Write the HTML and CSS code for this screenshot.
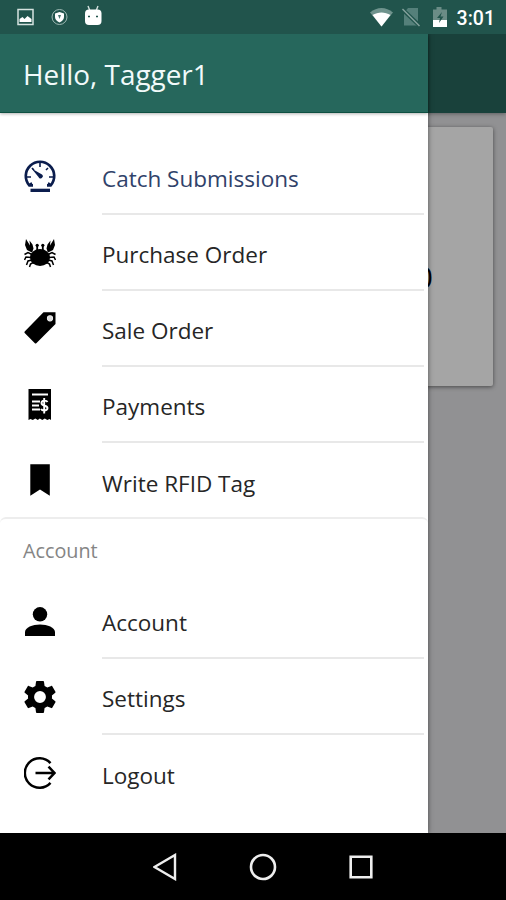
FILE: index.html
```html
<!DOCTYPE html>
<html lang="en">
<head>
<meta charset="utf-8">
<title>Tagger</title>
<link rel="stylesheet" href="styles.css">
</head>
<body>
<div class="phone">
  <header class="status">
    <svg class="notices" width="90" height="24" viewBox="0 0 90 24">
      <path d="M2 4.500h15v15H2z" fill="none" stroke="#d5e2df" stroke-width="1.500"/>
      <path d="M3.500 17v-3l3-2 2 2 3-3 4 3v3z" fill="#fff"/>
      <circle cx="43.500" cy="12" r="7.500" fill="none" stroke="#9eb9b4"/>
      <path d="M43.500 7l4.500 1.500v3.500c0 2.500-2 4.500-4.500 5.500-2.500-1-4.500-3-4.500-5.500V8.500z" fill="#fff"/>
      <path d="M42 10h3l-1.500 4z" fill="#47736d"/>
      <path d="M72 1l2 5M82 1l-2 5" stroke="#d5e2df" stroke-width="1.400"/>
      <rect x="69" y="4.500" width="16.500" height="15.500" rx="4" fill="#fff"/>
      <path d="M72 11.500h2M80 11.500h2" stroke="#21544c" stroke-width="1.500"/>
    </svg>
    <div class="signals">
      <svg width="82" height="24" viewBox="0 0 82 24">
        <path d="M0 7.500C7 1.500 16 1.500 23 7.500L11.500 21.500z" fill="#6f938d"/>
        <path d="M2.500 10C8 6.500 15 6.500 20.500 10l-9 11.500z" fill="#fff"/>
        <path d="M38 3h10v17.500H34V8z" fill="#55807a"/>
        <path d="M32.500 4.500l18 17" stroke="#21544c" stroke-width="4"/>
        <path d="M32.500 4l17 17" stroke="#86a39e" stroke-width="1.500"/>
        <path d="M63 4.500h3.500V2h5v2.500H77V20H63z" fill="#6b8c86"/>
        <path d="M63 15h14v7H63z" fill="#fff"/>
        <path d="M72 7l-5 6h3l-1 5 4.500-6.500h-3z" fill="#21544c"/>
      </svg>
      <span class="clock">3:01</span>
    </div>
  </header>

  <main class="screen">
    <section class="page">
      <div class="toolbar"></div>
      <div class="card"><span class="value">0</span></div>
    </section>

    <aside class="drawer">
      <h1 class="greeting">Hello, Tagger1</h1>
      <nav class="menu">
        <a class="item active">
          <svg class="icon" viewBox="0 0 32 32">
            <path d="M9 25.300H5.300A14.200 14.200 0 1 1 26.700 25.300H23" fill="none" stroke="currentColor" stroke-width="2.700"/>
            <path d="M16 3v4M8 8l2 2M24 8l-2 2M3 17h4M29 17h-4M5.500 24l2.500-1M26.500 24L24 23" stroke="currentColor" stroke-width="1.600"/>
            <path d="M7.500 8.500L18 14.500a2.200 2.200 0 1 1-3.500 2.500z" fill="currentColor"/>
            <path d="M6.500 28.700h19.500v3.300H6.500z" fill="currentColor"/>
          </svg>
          <span class="label">Catch Submissions</span>
        </a>
        <a class="item">
          <svg class="icon crab" viewBox="0 0 32 32">
            <ellipse cx="16" cy="20.500" rx="10" ry="8.500" fill="currentColor"/>
            <path d="M13.200 8v5M18.800 8v5M8 14.500l-4-4.500M24 14.500l4-4.500" fill="none" stroke="currentColor" stroke-width="1.800"/>
            <circle cx="13.200" cy="8.300" r="1.600" fill="currentColor"/>
            <circle cx="18.800" cy="8.300" r="1.600" fill="currentColor"/>
            <path d="M2 2L1 8l2 5 5 2.500 1.500-4-1-4-3-4 .5 5zM30 2l1 6-2 5-5 2.500-1.500-4 1-4 3-4-.5 5z" fill="currentColor"/>
            <path d="M8 17.500l-4-2-3.500 2M7 20.500l-5-.5-1.500 3M8 23l-4 1-1.500 4M10 25l-3.500 2L5.500 30M24 17.500l4-2 3.500 2M25 20.500l5-.5 1.500 3M24 23l4 1 1.500 4M22 25l3.500 2 1 3" fill="none" stroke="currentColor" stroke-width="1.500"/>
          </svg>
          <span class="label">Purchase Order</span>
        </a>
        <a class="item">
          <svg class="icon" viewBox="0 0 32 32">
            <path fill-rule="evenodd" d="M19.500.3H31.500V12L12.300 31.200Q11.600 31.900 10.900 31.200L.7 21Q0 20.300.7 19.600zM26 3.200a3.100 3.100 0 1 0 0 6.200 3.100 3.100 0 1 0 0-6.200z" fill="currentColor"/>
            <circle cx="26" cy="6.300" r="2.600" fill="#ddd"/>
          </svg>
          <span class="label">Sale Order</span>
        </a>
        <a class="item">
          <svg class="icon" viewBox="0 0 32 32">
            <path d="M4.500 1h22.500v31l-1.500-1-2.200 1-2.500-1.500-2.500 1.500-2.500-1.500L13.800 32l-2.500-1.500L8.800 32l-2.300-1-2 1z" fill="currentColor"/>
            <path d="M8 6.500h16M8 13.500h8M8 17.500h7M8 21.500h8" stroke="#fff" stroke-width="2"/>
            <path d="M23.500 14c-1-2-6-2-6 1 0 3.500 6 2 6 5s-5 3.300-6.500 1M20.200 10v15.500" fill="none" stroke="#fff" stroke-width="1.900"/>
          </svg>
          <span class="label">Payments</span>
        </a>
        <a class="item">
          <svg class="icon" viewBox="0 0 32 32">
            <path d="M6.300.2h19.500v31.500L16 25.500l-9.700 6.200z" fill="currentColor"/>
          </svg>
          <span class="label">Write RFID Tag</span>
        </a>
      </nav>
      <nav class="menu account">
        <h2 class="heading">Account</h2>
        <a class="item">
          <svg class="icon" viewBox="0 0 32 32">
            <circle cx="16" cy="9.300" r="7.200" fill="currentColor"/>
            <path d="M1 31v-4c0-4.500 7.500-7.500 15-7.500S31 22.500 31 27v4z" fill="currentColor"/>
          </svg>
          <span class="label">Account</span>
        </a>
        <a class="item">
          <svg class="icon" viewBox="2 2 20 20">
            <path d="M19.430 12.980c.04-.32.070-.640.070-.980s-.030-.660-.070-.980l2.110-1.650c.19-.15.240-.42.120-.640l-2-3.460c-.12-.22-.39-.3-.61-.22l-2.490 1c-.52-.4-1.080-.73-1.690-.98l-.38-2.650C14.460 2.180 14.250 2 14 2h-4c-.25 0-.46.180-.49.420l-.38 2.650c-.61.250-1.170.590-1.690.980l-2.490-1c-.23-.09-.49 0-.61.220l-2 3.460c-.13.220-.07.490.12.640l2.110 1.650c-.04.320-.07.650-.07.980s.030.660.070.980l-2.110 1.650c-.19.150-.24.420-.12.640l2 3.460c.12.220.39.300.61.220l2.490-1c.52.400 1.080.730 1.690.980l.38 2.650c.03.240.24.420.49.420h4c.25 0 .46-.18.490-.42l.38-2.650c.61-.25 1.170-.59 1.690-.98l2.490 1c.23.090.49 0 .61-.22l2-3.460c.12-.22.070-.49-.12-.64l-2.110-1.650zM12 15.700a3.700 3.700 0 1 1 0-7.400 3.700 3.700 0 0 1 0 7.400z" fill="currentColor"/>
          </svg>
          <span class="label">Settings</span>
        </a>
        <a class="item">
          <svg class="icon" viewBox="0 0 32 32">
            <path d="M26.500 6.200A14.700 14.700 0 1 0 26.500 25.800M11.500 16H30M24.500 9.700l6 6.300-6 6.300" fill="none" stroke="currentColor" stroke-width="2.500"/>
          </svg>
          <span class="label">Logout</span>
        </a>
      </nav>
    </aside>
  </main>

  <footer class="navbar">
    <svg width="24" height="28" viewBox="0 0 24 28"><path d="M22 2v24L1.500 14z" fill="none" stroke="#eee" stroke-width="2.400"/></svg>
    <svg width="28" height="28" viewBox="0 0 28 28"><circle cx="14" cy="14" r="12" fill="none" stroke="#eee" stroke-width="2.600"/></svg>
    <svg width="24" height="28" viewBox="0 0 24 28"><path d="M1.700 3.700h20.600v20.600H1.700z" fill="none" stroke="#eee" stroke-width="2.600"/></svg>
  </footer>
</div>
</body>
</html>
```
FILE: styles.css
```css
* { box-sizing: border-box; }

body {
  margin: 0;
  font-family: "Open Sans", "Noto Sans", sans-serif;
}

.phone {
  width: 506px;
  height: 900px;
  display: flex;
  flex-direction: column;
  overflow: hidden;
}

.status {
  height: 34px;
  flex: none;
  display: flex;
  justify-content: space-between;
  align-items: center;
  padding: 0 11px 0 16px;
  background: #21544c;
}

.status svg { display: block; }

.signals {
  display: flex;
  align-items: center;
  gap: 5px;
}

.clock {
  color: #fff;
  font: 500 19.500px/24px Roboto, sans-serif;
  padding-top: 3px;
}

.screen {
  display: grid;
  grid-template: 799px / 506px;
  overflow: hidden;
  flex: none;
}

.page,
.drawer { grid-area: 1 / 1; }

.page { background: #919193; }

.toolbar {
  height: 79px;
  background: #19413b;
  box-shadow: 0 1px 4px rgba(0, 0, 0, .35);
}

.card {
  height: 259px;
  margin: 14px 13px 0;
  padding-right: 60px;
  display: flex;
  align-items: center;
  justify-content: flex-end;
  background: #a5a5a5;
  border-radius: 2px;
  box-shadow: 0 1px 4px rgba(0, 0, 0, .5);
}

.value {
  font-size: 30px;
  padding-top: 40px;
}

.drawer {
  width: 428px;
  background: #fff;
  box-shadow: 0 0 5px rgba(0, 0, 0, .5);
  z-index: 1;
}

.greeting {
  height: 79px;
  margin: 0;
  padding: 2px 23px 0;
  font-size: 27.900px;
  font-weight: 400;
  line-height: 77px;
  color: #f1fafa;
  background: #26675c;
  border-bottom: 1px solid #0e5042;
  box-shadow: 0 1px 3px rgba(0, 0, 0, .3);
}

.menu { padding-top: 26px; }

.item {
  height: 76px;
  display: grid;
  grid-template-columns: 32px 322px;
  column-gap: 46px;
  align-items: center;
  padding-left: 24px;
  color: #000;
}

.icon {
  width: 32px;
  height: 32px;
  margin-top: -2px;
  display: block;
}

.crab { margin-top: 0; }

.label {
  height: 76px;
  padding-top: 2px;
  border-bottom: 2px solid #e8e8e8;
  font-size: 22.500px;
  font-weight: 400;
  line-height: 76px;
  color: #262626;
}

.item:last-child .label {
  border-bottom: 0;
  padding-top: 3px;
}

.active { color: #0b1d4d; }
.active .label { color: #30426a; }

.account {
  margin-top: -2px;
  padding-top: 0;
  border-top: 2px solid #ededed;
  border-radius: 6px;
}

.heading {
  height: 64px;
  margin: 0;
  padding-left: 23px;
  font-size: 19.800px;
  font-weight: 400;
  line-height: 63px;
  color: #858585;
}

.account .icon { margin-top: -1px; }

.navbar {
  flex: 1;
  display: flex;
  align-items: center;
  gap: 72px;
  padding-left: 153px;
  background: #000;
}
```
